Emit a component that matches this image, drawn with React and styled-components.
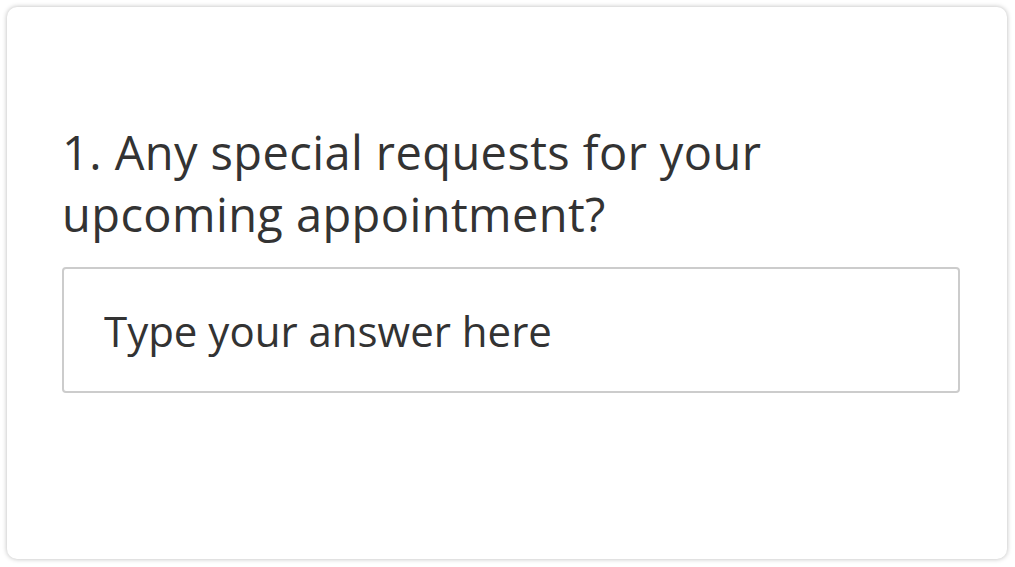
import styled, { createGlobalStyle } from "styled-components";

const GlobalStyle = createGlobalStyle`
  html, body {
    margin: 0;
    padding: 0;
    background: #ffffff;
  }
  body {
    font-family: "Open Sans", "Lato", sans-serif;
  }
`;

const Page = styled.div`
  width: 1015px;
  height: 567px;
  padding: 7px 8px 8px 7px;
  box-sizing: border-box;
`;

const Card = styled.div`
  width: 100%;
  height: 100%;
  box-sizing: border-box;
  background: #ffffff;
  border-radius: 10px;
  box-shadow: 0 0 5px rgba(0, 0, 0, 0.28);
  padding: 114px 47px 0 55px;
  display: flex;
  flex-direction: column;
`;

const Question = styled.h2`
  margin: 0 0 22px;
  font-size: 47px;
  font-weight: 400;
  line-height: 62px;
  letter-spacing: 0.4px;
  color: #333333;
`;

const AnswerInput = styled.input`
  width: 100%;
  height: 126px;
  box-sizing: border-box;
  border: 2px solid #cccccc;
  border-radius: 4px;
  padding: 0 40px;
  font-family: inherit;
  font-size: 42px;
  color: #333333;
  outline: none;

  &::placeholder {
    color: #333333;
    opacity: 1;
  }
`;

export default function App() {
  return (
    <>
      <GlobalStyle />
      <Page>
        <Card>
          <Question>
            1. Any special requests for your
            <br />
            upcoming appointment?
          </Question>
          <AnswerInput type="text" placeholder="Type your answer here" />
        </Card>
      </Page>
    </>
  );
}
